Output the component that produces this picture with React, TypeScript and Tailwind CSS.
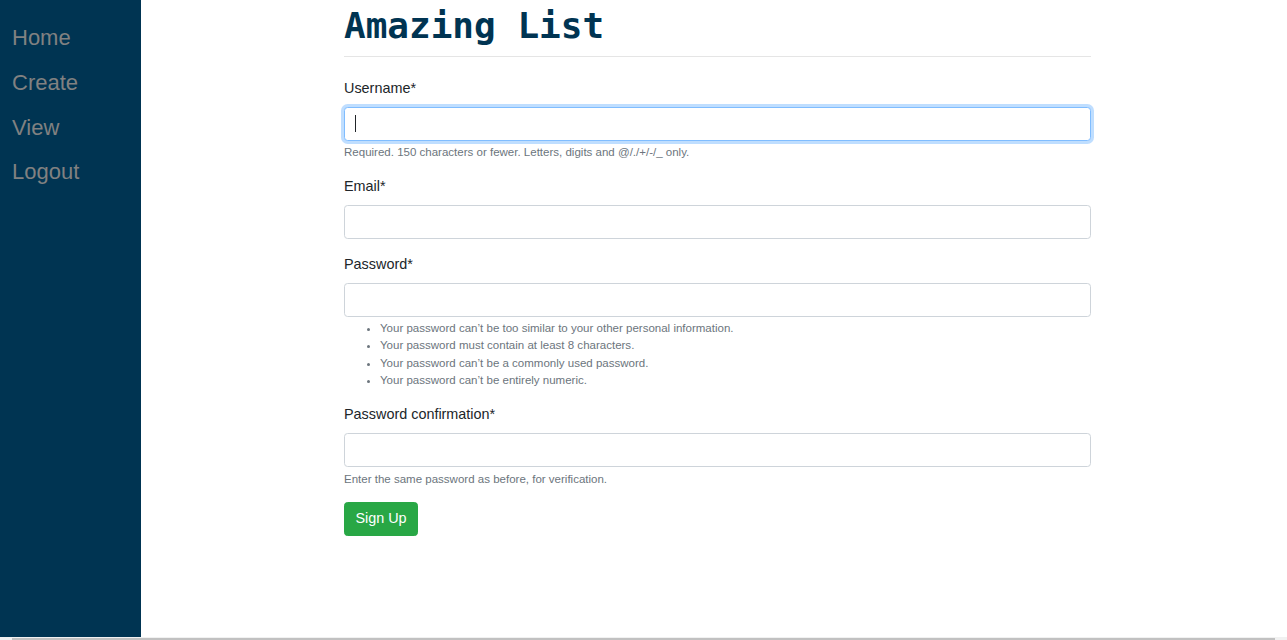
const sans = { fontFamily: '"Liberation Sans", Arial, sans-serif' };

const navLinks = ["Home", "Create", "View", "Logout"];

const passwordRules = [
  "Your password can’t be too similar to your other personal information.",
  "Your password must contain at least 8 characters.",
  "Your password can’t be a commonly used password.",
  "Your password can’t be entirely numeric.",
];

function Label({ children }: { children: React.ReactNode }) {
  return <div className="text-[14.4px] leading-[21.6px] text-[#212529] mb-[7.5px]">{children}</div>;
}

function Field({ focused = false }: { focused?: boolean }) {
  return (
    <div
      className={
        focused
          ? "h-[34px] w-full rounded-[3.6px] border border-[#80bdff] bg-white shadow-[0_0_0_3px_rgba(0,123,255,0.25)] flex items-center pl-[10px]"
          : "h-[34px] w-full rounded-[3.6px] border border-[#ced4da] bg-white"
      }
    >
      {focused && <span className="block h-[17px] w-[1px] bg-[#212529]" />}
    </div>
  );
}

function Help({ children }: { children: React.ReactNode }) {
  return <div className="mt-[3.6px] text-[11.52px] leading-[17.28px] text-[#6c757d]">{children}</div>;
}

export default function App() {
  return (
    <div className="flex h-screen w-full flex-col bg-white" style={sans}>
      <div className="flex min-h-0 flex-1">
        <nav className="w-[141px] shrink-0 bg-[#003452] pt-[16px] pl-[12px]">
          {navLinks.map((l) => (
            <div key={l} className="text-[22px] leading-[44.8px] text-[#818181]">
              {l}
            </div>
          ))}
        </nav>
        <main className="flex-1">
          <div className="ml-[203px] w-[747px]">
            <h1
              className="mt-[4px] text-[36px] font-bold leading-[43px] text-[#003452]"
              style={{ fontFamily: '"DejaVu Sans Mono", monospace' }}
            >
              Amazing List
            </h1>
            <div className="mt-[9px] h-px bg-[#e5e5e5]" />

            <form className="mt-[20.5px]">
              <Label>Username*</Label>
              <Field focused />
              <Help>Required. 150 characters or fewer. Letters, digits and @/./+/-/_ only.</Help>

              <div className="mt-[14.4px]">
                <Label>Email*</Label>
                <Field />
              </div>

              <div className="mt-[15.4px]">
                <Label>Password*</Label>
                <Field />
                <ul className="mt-[2.5px] mb-[14px] list-disc pl-[36px] text-[11.52px] leading-[17.5px] text-[#6c757d]">
                  {passwordRules.map((r) => (
                    <li key={r}>{r}</li>
                  ))}
                </ul>
              </div>

              <div>
                <Label>Password confirmation*</Label>
                <Field />
                <Help>Enter the same password as before, for verification.</Help>
              </div>

              <button
                type="button"
                className="mt-[14px] h-[34px] rounded-[3.6px] border border-[#28a745] bg-[#28a745] px-[10.4px] text-[14.4px] text-white"
              >
                Sign Up
              </button>
            </form>
          </div>
        </main>
      </div>
      <div className="h-[3px] shrink-0 bg-[#f1f1f1]">
        <div className="mt-[1px] ml-[12px] mr-[12px] h-[2px] bg-[#c1c1c1]" />
      </div>
    </div>
  );
}
